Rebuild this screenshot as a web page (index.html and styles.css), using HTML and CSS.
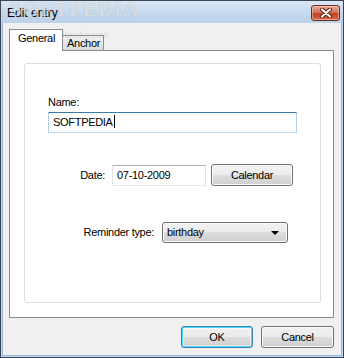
FILE: index.html
```html
<!DOCTYPE html>
<html lang="en">
<head>
  <meta charset="UTF-8">
  <title>Edit entry</title>
  <link rel="stylesheet" href="styles.css">
</head>
<body>
  <div class="window">
    <!-- Title bar -->
    <div class="titlebar">
      <span class="title">Edit entry</span>
      <div class="close-btn">
        <svg width="14" height="10" viewBox="0 0 14 10">
          <path d="M3 1.5 L11 8.5 M11 1.5 L3 8.5" stroke="#5a1a10" stroke-width="4" stroke-linecap="round"/>
          <path d="M3 1.5 L11 8.5 M11 1.5 L3 8.5" stroke="#ffffff" stroke-width="2.2" stroke-linecap="round"/>
        </svg>
      </div>
    </div>

    <div class="client">
      <!-- Tabs -->
      <div class="tabs">
        <div class="tab tab-active">General</div>
        <div class="tab">Anchor</div>
      </div>

      <div class="panel">
        <div class="group">
          <div class="field-name">
            <label class="label">Name:</label>
            <div class="textbox textbox-focus name-box">SOFTPEDIA<span class="caret"></span></div>
          </div>

          <div class="row row-date">
            <label class="label label-date">Date:</label>
            <div class="textbox date-box">07-10-2009</div>
            <div class="btn calendar-btn">Calendar</div>
          </div>

          <div class="row row-reminder">
            <label class="label label-reminder">Reminder type:</label>
            <div class="btn select-box">
              <span>birthday</span>
              <span class="arrow"></span>
            </div>
          </div>
        </div>
      </div>

      <!-- Buttons -->
      <div class="actions">
        <div class="btn btn-default">OK</div>
        <div class="btn">Cancel</div>
      </div>
    </div>

    <!-- Watermark -->
    <div class="watermark">SOFTPEDIA</div>
    <div class="watermark-url">www.softpedia.com</div>
  </div>
</body>
</html>
```

FILE: styles.css
```css
/* Global reset */
* {
  margin: 0;
  padding: 0;
  box-sizing: border-box;
}

body {
  font-family: 'Liberation Sans', Arial, sans-serif;
  font-size: 11px;
  letter-spacing: -0.3px;
  color: #000;
  background-color: #fff;
  width: 344px;
  height: 358px;
  overflow: hidden;
}

/* Window frame */
.window {
  position: relative;
  width: 344px;
  height: 358px;
  border: 1px solid #3b4450;
  background-color: #c2d7ec;
  display: flex;
  flex-direction: column;
}

.titlebar {
  height: 22px;
  flex-shrink: 0;
  display: flex;
  align-items: center;
  justify-content: space-between;
  padding: 0 3px 0 6px;
  background: linear-gradient(#d9e6f4, #c3d7ec 60%, #bcd2ea);
}

.title {
  font-size: 12px;
  line-height: 14px;
  letter-spacing: 0;
  margin-top: 2px;
}

.close-btn {
  width: 29px;
  height: 16px;
  margin-top: 2px;
  border: 1px solid #6b2a22;
  border-radius: 3px;
  background: linear-gradient(#e9aa9c, #d5735d 45%, #c2401f 55%, #d5684c);
  box-shadow: inset 0 0 0 1px rgba(255, 220, 210, 0.5);
  display: flex;
  align-items: center;
  justify-content: center;
}

/* Client area */
.client {
  flex: 1;
  margin: 0 1px 1px 1px;
  border: 1px solid #98b9dc;
  border-top: none;
  background-color: #f0f0f0;
  padding: 6px 7px 0 6px;
  display: flex;
  flex-direction: column;
}

/* Tabs */
.tabs {
  display: flex;
  align-items: flex-end;
  height: 21px;
}

.tab {
  height: 15px;
  padding: 0 3px 0 4px;
  margin-left: -1px;
  border: 1px solid #898c95;
  border-bottom: none;
  background: linear-gradient(#f3f3f3, #e6e6e6 50%, #d9d9d9);
  line-height: 15px;
}

.tab-active {
  position: relative;
  z-index: 1;
  height: 22px;
  margin-left: 0;
  margin-bottom: -1px;
  padding: 0 7px 0 8px;
  background: #fff;
  line-height: 17px;
}

.panel {
  height: 268px;
  border: 1px solid #898c95;
  background-color: #fff;
  padding: 12px 12px 14px 14px;
  display: flex;
}

.group {
  flex: 1;
  border: 1px solid #d5dfe5;
  border-radius: 3px;
  padding: 32px 0 0 23px;
}

.label {
  display: block;
  line-height: 13px;
}

/* Text boxes */
.textbox {
  height: 21px;
  line-height: 19px;
  padding: 0 4px;
  border: 1px solid #e2e3ea;
  border-top-color: #abadb3;
  border-bottom-color: #e3e9ef;
  background-color: #fff;
  white-space: nowrap;
}

.textbox-focus {
  border-color: #b5cfe7;
  border-top-color: #3d7bad;
  border-bottom-color: #b7d9ed;
}

.name-box {
  width: 249px;
  margin-top: 3px;
}

.caret {
  display: inline-block;
  width: 1px;
  height: 13px;
  margin-left: 1px;
  background-color: #000;
  vertical-align: -2px;
}

.row {
  display: flex;
  align-items: center;
}

.row-date {
  margin-top: 31px;
}

.label-date {
  width: 57px;
  text-align: right;
  margin-right: 7px;
}

.date-box {
  width: 94px;
  margin-right: 5px;
}

.row-reminder {
  margin-top: 36px;
}

.label-reminder {
  width: 106px;
  text-align: right;
  margin-right: 8px;
}

/* Buttons */
.btn {
  height: 22px;
  border: 1px solid #707070;
  border-radius: 3px;
  background: linear-gradient(#f2f2f2, #ebebeb 50%, #dddddd 50%, #cfcfcf);
  box-shadow: inset 0 0 0 1px #fbfbfb;
  display: flex;
  align-items: center;
  justify-content: center;
  line-height: 13px;
}

.calendar-btn {
  width: 82px;
}

.select-box {
  width: 126px;
  height: 21px;
  justify-content: space-between;
  padding: 0 8px 0 4px;
}

.arrow {
  width: 0;
  height: 0;
  border-left: 4px solid transparent;
  border-right: 4px solid transparent;
  border-top: 4px solid #000;
}

.actions {
  display: flex;
  justify-content: flex-end;
  gap: 8px;
  margin-top: 8px;
}

.actions .btn {
  width: 73px;
}

.actions .btn-default {
  width: 72px;
  border-color: #3c7fb1;
  box-shadow: inset 0 0 0 1px #48d8fb, inset 0 0 0 2px rgba(255, 255, 255, 0.5);
}

/* Watermark overlay */
.watermark {
  position: absolute;
  left: 9px;
  top: -4px;
  font-family: 'Liberation Serif', serif;
  font-size: 21px;
  line-height: 24px;
  font-weight: bold;
  letter-spacing: 1px;
  color: rgba(255, 255, 255, 0.6);
  text-shadow: 0 0 1px rgba(80, 90, 100, 0.4);
  pointer-events: none;
}

.watermark-url {
  position: absolute;
  left: 30px;
  top: 29px;
  font-size: 9px;
  letter-spacing: 0;
  color: rgba(150, 150, 150, 0.25);
  pointer-events: none;
}
```
